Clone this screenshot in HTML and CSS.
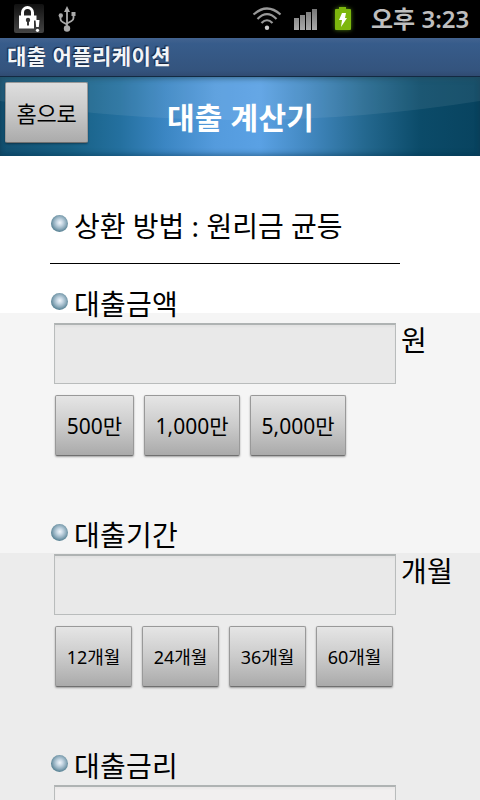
FILE: index.html
```html
<!DOCTYPE html>
<html lang="ko">
<head>
<meta charset="utf-8">
<title>대출 어플리케이션</title>
<link rel="stylesheet" href="styles.css">
</head>
<body>
<div class="status">
  <svg class="lock" width="32" height="32" viewBox="0 0 32 32">
    <defs><linearGradient id="lk" x1="0" y1="0" x2="0" y2="1"><stop offset="0" stop-color="#111"/><stop offset="1" stop-color="#444"/></linearGradient></defs>
    <rect x="1" y="1" width="30" height="29" rx="2" fill="url(#lk)"/>
    <path d="M9.500 14V9.500a5 5 0 0 1 10 0v4" fill="none" stroke="#fff" stroke-width="3"/>
    <path d="M6 12.500h17.500v5H21v8H6z" fill="#fff"/>
    <circle cx="15" cy="17" r="2.200" fill="#333"/><path d="M14 17.500h2v5h-2z" fill="#333"/>
    <path d="M22.500 17h4l-.7 7h-2.600z" fill="#fff"/><circle cx="24.500" cy="27.300" r="1.600" fill="#fff"/>
  </svg>
  <svg class="usb" width="18" height="28" viewBox="0 0 18 28">
    <g fill="none" stroke="#aaa" stroke-width="1.800"><path d="M9 4v18M2.500 10v3q0 2 2 3l4.500 2.500M15.500 9v3q0 2-2 3L9 17.500"/></g>
    <g fill="#aaa"><path d="M9 0l3 6H6zM13.500 6h4v4h-4z"/><circle cx="2.800" cy="9.500" r="2.200"/><circle cx="9" cy="22.500" r="3.200"/></g>
  </svg>
  <svg class="wifi" width="30" height="24" viewBox="0 0 30 24">
    <g fill="none" stroke="#999" stroke-width="2.200"><path d="M1.500 7.500Q15-4.500 28.500 7.500M5.500 12Q15 2.500 24.500 12M9.500 16Q15 10.500 20.500 16"/></g><circle cx="15" cy="20.800" r="2.200" fill="#ccc"/>
  </svg>
  <svg class="signal" width="23" height="22" viewBox="0 0 23 22">
    <defs><linearGradient id="sg" x1="0" y1="0" x2="0" y2="1"><stop offset="0" stop-color="#777"/><stop offset="1" stop-color="#aaa"/></linearGradient></defs>
    <path d="M0 10h5v12H0zM6 7h5v15H6zM12 4h5v18h-5zM18 1h5v21h-5z" fill="url(#sg)"/>
  </svg>
  <svg class="battery" width="18" height="24" viewBox="0 0 18 24">
    <path d="M5 0h7v2h4q1 0 1 1v19q0 1-1 1H2q-1 0-1-1V3q0-1 1-1h3z" fill="#7db70d"/>
    <path d="M8 6h4l-1 5h2l-6 9 1-7H5z" fill="#fff"/>
  </svg>
  <span class="clock">오후 3:23</span>
</div>
<div class="appbar">대출 어플리케이션</div>
<header class="header">
  <svg class="gloss" width="480" height="79" viewBox="0 0 480 79"><path d="M0 24Q240 62 480 24V0H0z" fill="#fff" fill-opacity=".07"/></svg>
  <button class="btn home">홈으로</button>
  <h1 class="title">대출 계산기</h1>
</header>
<main class="content">
  <div class="method"><i class="dot"></i><span>상환 방법 : 원리금 균등</span></div>
  <section class="group">
    <div class="label"><i class="dot"></i><span>대출금액</span></div>
    <div class="row"><div class="field"></div><span class="unit">원</span></div>
    <div class="buttons"><button class="btn w79">500만</button><button class="btn w96">1,000만</button><button class="btn w96">5,000만</button></div>
  </section>
  <section class="group">
    <div class="label"><i class="dot"></i><span>대출기간</span></div>
    <div class="row"><div class="field"></div><span class="unit">개월</span></div>
    <div class="buttons months"><button class="btn">12개월</button><button class="btn">24개월</button><button class="btn">36개월</button><button class="btn">60개월</button></div>
  </section>
  <section class="group last">
    <div class="label"><i class="dot"></i><span>대출금리</span></div>
    <div class="row"><div class="field rate"></div></div>
  </section>
</main>
</body>
</html>
```
FILE: styles.css
```css
* { box-sizing: border-box; }
body {
  margin: 0;
  width: 480px;
  height: 800px;
  overflow: hidden;
  display: flex;
  flex-direction: column;
  font-family: "Noto Sans", "Noto Sans CJK KR", sans-serif;
  color: #000;
}
.status {
  flex: none;
  height: 38px;
  display: flex;
  align-items: flex-start;
  background: #000;
  color: #bebebe;
}
.lock { margin: 3px 0 0 13px; }
.usb { margin: 6px 0 0 13px; }
.wifi { margin: 7px 0 0 176px; }
.signal { margin: 8px 0 0 12px; }
.battery { margin: 7px 0 0 17px; filter: drop-shadow(0 0 2px #4f8010); }
.clock {
  margin-left: 19px;
  font-size: 24px;
  line-height: 38px;
  font-weight: 600;
  white-space: nowrap;
}
.appbar {
  flex: none;
  height: 39px;
  padding-left: 7px;
  background: linear-gradient(#43638f, #375c8b 15%, #34547e 85%, #304b72);
  border-bottom: 1px solid #132a42;
  color: #f2f5f8;
  font-size: 21px;
  line-height: 36px;
  font-weight: 700;
  letter-spacing: .45px;
  text-shadow: -1px -1px 1px #152238;
}
.header {
  flex: none;
  position: relative;
  height: 79px;
  padding: 5px 0 0 5px;
  display: flex;
  background: linear-gradient(90deg, #125071 0, #176084 70px, #24709f 120px, #3b86c3 165px, #549bdd 215px, #5aa1e4 260px, #4187bf 310px, #24688f 365px, #0b4b69 420px, #08435f 480px);
  box-shadow: inset 0 2px 5px rgba(20, 60, 80, .55), inset 0 -3px 5px rgba(0, 50, 80, .3);
}
.gloss { position: absolute; left: 0; top: 0; }
.btn {
  height: 61px;
  padding: 0;
  border: 1px solid #999;
  border-bottom-color: #707070;
  border-radius: 2px;
  background: linear-gradient(#e5e5e5, #cbcbcb 50%, #aaa);
  box-shadow: 0 1px 2px rgba(0, 0, 0, .35);
  color: #000;
  font-family: inherit;
  font-size: 21px;
  line-height: 30px;
  text-align: center;
}
.home {
  position: relative;
  width: 83px;
  font-size: 22px;
  letter-spacing: -.3px;
  background: linear-gradient(#dedede, #c8c8c8 50%, #ababab);
}
.title {
  position: relative;
  margin: 0 0 0 79px;
  color: #fff;
  font-size: 30px;
  line-height: 72px;
  letter-spacing: .2px;
  font-weight: 700;
}
.content {
  flex: 1;
  min-height: 0;
  overflow: hidden;
  padding: 46px 0 0 50px;
  background: linear-gradient(#fff 0 157px, #f5f5f5 157px 397px, #ececec 397px);
  font-size: 28px;
}
.method, .label { display: flex; align-items: center; white-space: nowrap; }
.method {
  width: 350px;
  height: 62px;
  padding-bottom: 14px;
  border-bottom: 1px solid #000;
}
.method span, .label span { margin-left: 6px; line-height: 38px; }
.label span, .unit { letter-spacing: .2px; }
.dot {
  flex: none;
  width: 17px;
  height: 17px;
  margin: 0 0 4px 1px;
  border-radius: 50%;
  background: radial-gradient(circle at 52% 45%, #f1f6fb 0, #c9d9e5 22%, #91aebe 48%, #547f91 72%, #416b7b);
}
.group { height: 231px; }
.last { height: 75px; overflow: hidden; }
.label { height: 59px; padding-top: 20px; }
.row { display: flex; height: 62px; padding-left: 4px; }
.field {
  width: 342px;
  height: 61px;
  border: 1px solid #b9bcbc;
  border-top: 2px solid #afb3b3;
  background: #e9e9e9;
  box-shadow: inset 0 2px 2px rgba(0, 0, 0, .03);
}
.rate { background: #f1efef; }
.unit { margin-left: 5px; line-height: 35px; }
.buttons { display: flex; gap: 10px; padding: 10px 0 0 5px; }
.w79 { width: 79px; }
.w96 { width: 96px; }
.months .btn { width: 77px; font-size: 18px; }
```
